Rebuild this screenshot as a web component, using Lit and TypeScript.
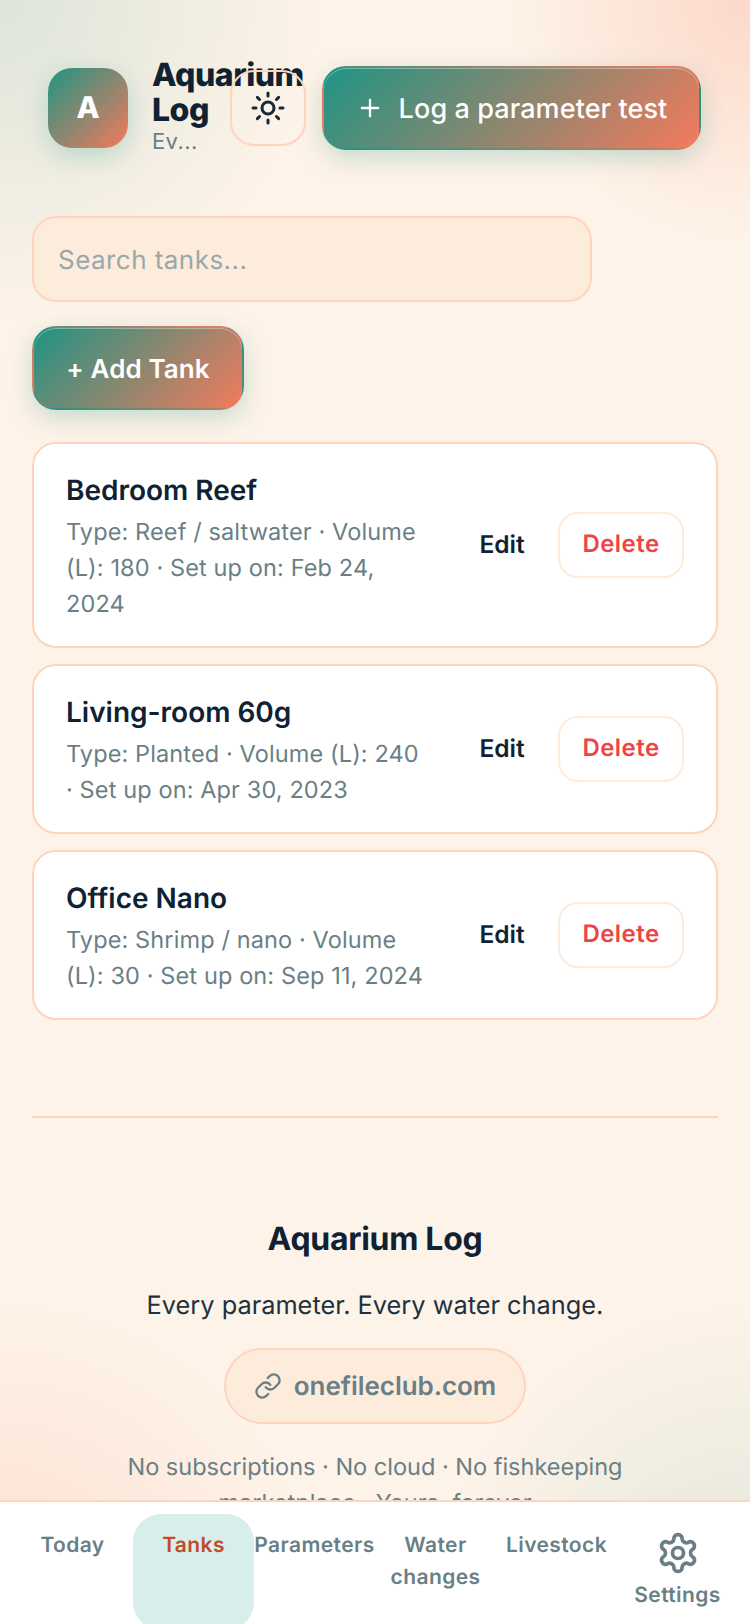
import { LitElement, html, css } from "lit";
import { customElement } from "lit/decorators.js";

const tanks = [
  { name: "Bedroom Reef", meta: "Type: Reef / saltwater · Volume (L): 180 · Set up on: Feb 24, 2024" },
  { name: "Living-room 60g", meta: "Type: Planted · Volume (L): 240 · Set up on: Apr 30, 2023" },
  { name: "Office Nano", meta: "Type: Shrimp / nano · Volume (L): 30 · Set up on: Sep 11, 2024" },
];

@customElement("app-root")
export class AppRoot extends LitElement {
  static styles = css`
    :host {
      display: flex;
      flex-direction: column;
      height: 1624px;
      overflow: hidden;
      font-family: Inter, "Noto Sans", sans-serif;
      text-rendering: geometricPrecision;
      color: #0f2233;
      background:
        radial-gradient(circle at 0% 0%, rgba(31, 148, 132, 0.15), transparent 320px),
        radial-gradient(circle at 100% 0%, rgba(244, 122, 92, 0.22), transparent 240px),
        radial-gradient(circle at 0% 100%, rgba(244, 122, 92, 0.18), transparent 320px),
        radial-gradient(circle at 100% 100%, rgba(31, 148, 132, 0.14), transparent 320px),
        #fef3e8;
    }
    * { box-sizing: border-box; }
    .main { flex: 1; min-height: 0; overflow: hidden; padding: 0 32px; }
    .header { display: flex; align-items: center; gap: 16px; padding-top: 66px; height: 150px; }
    .brand { display: flex; align-items: center; gap: 24px; width: 258px; flex: none; margin-left: 16px; position: relative; }
    .avatar {
      width: 80px; height: 80px; flex: none; border-radius: 24px;
      display: flex; align-items: center; justify-content: center;
      color: #fff; font-size: 30px; font-weight: 800;
      background: linear-gradient(135deg, #1f9484, #f47a5c);
      box-shadow: 0 8px 24px rgba(31, 148, 132, 0.25);
    }
    .brand-text { width: 130px; flex: none; margin-top: -4px; }
    h1 { margin: 0; font-size: 32px; line-height: 35px; font-weight: 800; letter-spacing: -0.5px; }
    .tag { font-size: 22px; line-height: 26px; color: #6a7f85; letter-spacing: 0.4px; margin-top: 2px; }
    .sun {
      width: 76px; height: 76px; flex: none; border-radius: 24px; border: 2px solid #ffd4bc;
      display: flex; align-items: center; justify-content: center;
      margin-left: -92px; position: relative;
    }
    .grad {
      border: 2px solid transparent; border-radius: 24px; color: #fff;
      background: linear-gradient(135deg, #1f9484, #f47a5c);
      box-shadow: 0 8px 24px rgba(31, 148, 132, 0.25), inset 0 1px 0 rgba(255, 255, 255, 0.35);
      display: flex; align-items: center; justify-content: center; font-weight: 600;
    }
    .primary { width: 379px; height: 84px; flex: none; gap: 15px; font-size: 27px; font-weight: 500; letter-spacing: 0.1px; }
    .search {
      width: 560px; height: 86px; margin-top: 66px; border-radius: 24px; border: 2px solid #ffd4bc;
      background: #fdecdc; display: flex; align-items: center; padding: 2px 24px 0;
      font-size: 26px; color: #98a8aa; letter-spacing: 0.45px;
    }
    .add { width: 212px; height: 84px; margin-top: 24px; padding-top: 2px; font-size: 26px; font-weight: 600; letter-spacing: 0.1px; }
    .list { display: flex; flex-direction: column; gap: 16px; margin-top: 32px; }
    .card {
      background: #fff; border: 2px solid #ffd4bc; border-radius: 24px;
      padding: 25px 32px 24px; display: flex; align-items: center;
    }
    .info { flex: none; width: 360px; }
    .name { font-size: 28px; line-height: 42px; font-weight: 600; }
    .meta { font-size: 23.5px; line-height: 36px; color: #6a7f85; margin-top: 3px; letter-spacing: 0.12px; }
    .edit { width: 80px; margin: -4px 16px 0 36px; text-align: center; font-size: 24.5px; font-weight: 600; flex: none; }
    .del {
      width: 126px; height: 66px; flex: none; border: 2px solid #fdecdc; border-radius: 20px; margin-top: -2px;
      padding-bottom: 2px; display: flex; align-items: center; justify-content: center;
      font-size: 24px; letter-spacing: 0.45px; font-weight: 600; color: #ef4444;
    }
    .footer { margin-top: 96px; border-top: 2px solid #ffd4bc; text-align: center; padding-top: 99px; }
    .f-title { font-size: 32px; line-height: 44px; font-weight: 700; letter-spacing: -0.3px; }
    .f-sub { font-size: 25.35px; line-height: 40px; margin-top: 25px; color: #1d3140; }
    .pill {
      display: inline-flex; align-items: center; gap: 12px; height: 76px; padding: 0 28px;
      margin-top: 22px; border-radius: 38px; border: 2px solid #ffd4bc; background: #fdecdc;
      font-size: 26px; font-weight: 600; color: #6a7f85; letter-spacing: -0.05px;
    }
    .pill svg { flex: none; }
    .fine { font-size: 23.5px; line-height: 36px; color: #6a7f85; margin: 25px auto 0; width: 560px; }
    .nav {
      flex: none; height: 124px; background: #fff; border-top: 2px solid #ffd4bc;
      display: flex; padding: 12px 12px 0; align-items: flex-start;
    }
    .item {
      flex: 1 1 0; min-width: 0;
      font-size: 21px; line-height: 32px; font-weight: 600; color: #6a7f85; text-align: center; letter-spacing: 0.4px;
      padding: 16px 0 0; display: flex; flex-direction: column; align-items: center;
    }
    .item.on { background: #d8eeeb; color: #c24a2a; border-radius: 28px; height: 116px; }
    .item.icon { padding-top: 17px; gap: 5px; }
  `;

  render() {
    return html`
      <div class="main">
        <div class="header">
          <div class="brand">
            <div class="avatar">A</div>
            <div class="brand-text">
              <h1>Aquarium Log</h1>
              <div class="tag">Ev...</div>
            </div>
          </div>
          <div class="sun">
            <svg width="36" height="36" viewBox="0 0 24 24" fill="none" stroke="#16293a" stroke-width="2" stroke-linecap="round" stroke-linejoin="round">
              <circle cx="12" cy="12" r="4"></circle>
              <path d="M12 2v2M12 20v2M4.93 4.93l1.41 1.41M17.66 17.66l1.41 1.41M2 12h2M20 12h2M6.34 17.66l-1.41 1.41M19.07 4.93l-1.41 1.41"></path>
            </svg>
          </div>
          <div class="grad primary">
            <svg width="28" height="28" viewBox="0 0 24 24" fill="none" stroke="#fff" stroke-width="2" stroke-linecap="round"><path d="M5 12h14M12 5v14"></path></svg>
            <span>Log a parameter test</span>
          </div>
        </div>
        <div class="search">Search tanks...</div>
        <div class="grad add">+ Add Tank</div>
        <div class="list">
          ${tanks.map(
            (t) => html`<div class="card">
              <div class="info">
                <div class="name">${t.name}</div>
                <div class="meta">${t.meta}</div>
              </div>
              <div class="edit">Edit</div>
              <div class="del">Delete</div>
            </div>`
          )}
        </div>
        <div class="footer">
          <div class="f-title">Aquarium Log</div>
          <div class="f-sub">Every parameter. Every water change.</div>
          <div class="pill">
            <svg width="28" height="28" viewBox="0 0 24 24" fill="none" stroke="#6a7f85" stroke-width="2" stroke-linecap="round" stroke-linejoin="round">
              <path d="M10 13a5 5 0 0 0 7.54.54l3-3a5 5 0 0 0-7.07-7.07l-1.72 1.71"></path>
              <path d="M14 11a5 5 0 0 0-7.54-.54l-3 3a5 5 0 0 0 7.07 7.07l1.71-1.71"></path>
            </svg>
            onefileclub.com
          </div>
          <div class="fine">No subscriptions · No cloud · No fishkeeping marketplace · Yours, forever</div>
        </div>
      </div>
      <div class="nav">
        <div class="item">Today</div>
        <div class="item on">Tanks</div>
        <div class="item">Parameters</div>
        <div class="item">Water changes</div>
        <div class="item">Livestock</div>
        <div class="item icon">
          <svg width="44" height="44" viewBox="0 0 24 24" fill="none" stroke="#6a7f85" stroke-width="2" stroke-linecap="round" stroke-linejoin="round">
            <path d="M12.22 2h-.44a2 2 0 0 0-2 2v.18a2 2 0 0 1-1 1.73l-.43.25a2 2 0 0 1-2 0l-.15-.08a2 2 0 0 0-2.73.73l-.22.38a2 2 0 0 0 .73 2.73l.15.1a2 2 0 0 1 1 1.72v.51a2 2 0 0 1-1 1.74l-.15.09a2 2 0 0 0-.73 2.73l.22.38a2 2 0 0 0 2.73.73l.15-.08a2 2 0 0 1 2 0l.43.25a2 2 0 0 1 1 1.73V20a2 2 0 0 0 2 2h.44a2 2 0 0 0 2-2v-.18a2 2 0 0 1 1-1.73l.43-.25a2 2 0 0 1 2 0l.15.08a2 2 0 0 0 2.73-.73l.22-.39a2 2 0 0 0-.73-2.73l-.15-.08a2 2 0 0 1-1-1.74v-.5a2 2 0 0 1 1-1.74l.15-.09a2 2 0 0 0 .73-2.73l-.22-.38a2 2 0 0 0-2.73-.73l-.15.08a2 2 0 0 1-2 0l-.43-.25a2 2 0 0 1-1-1.73V4a2 2 0 0 0-2-2z"></path>
            <circle cx="12" cy="12" r="3"></circle>
          </svg>
          <span>Settings</span>
        </div>
      </div>
    `;
  }
}
